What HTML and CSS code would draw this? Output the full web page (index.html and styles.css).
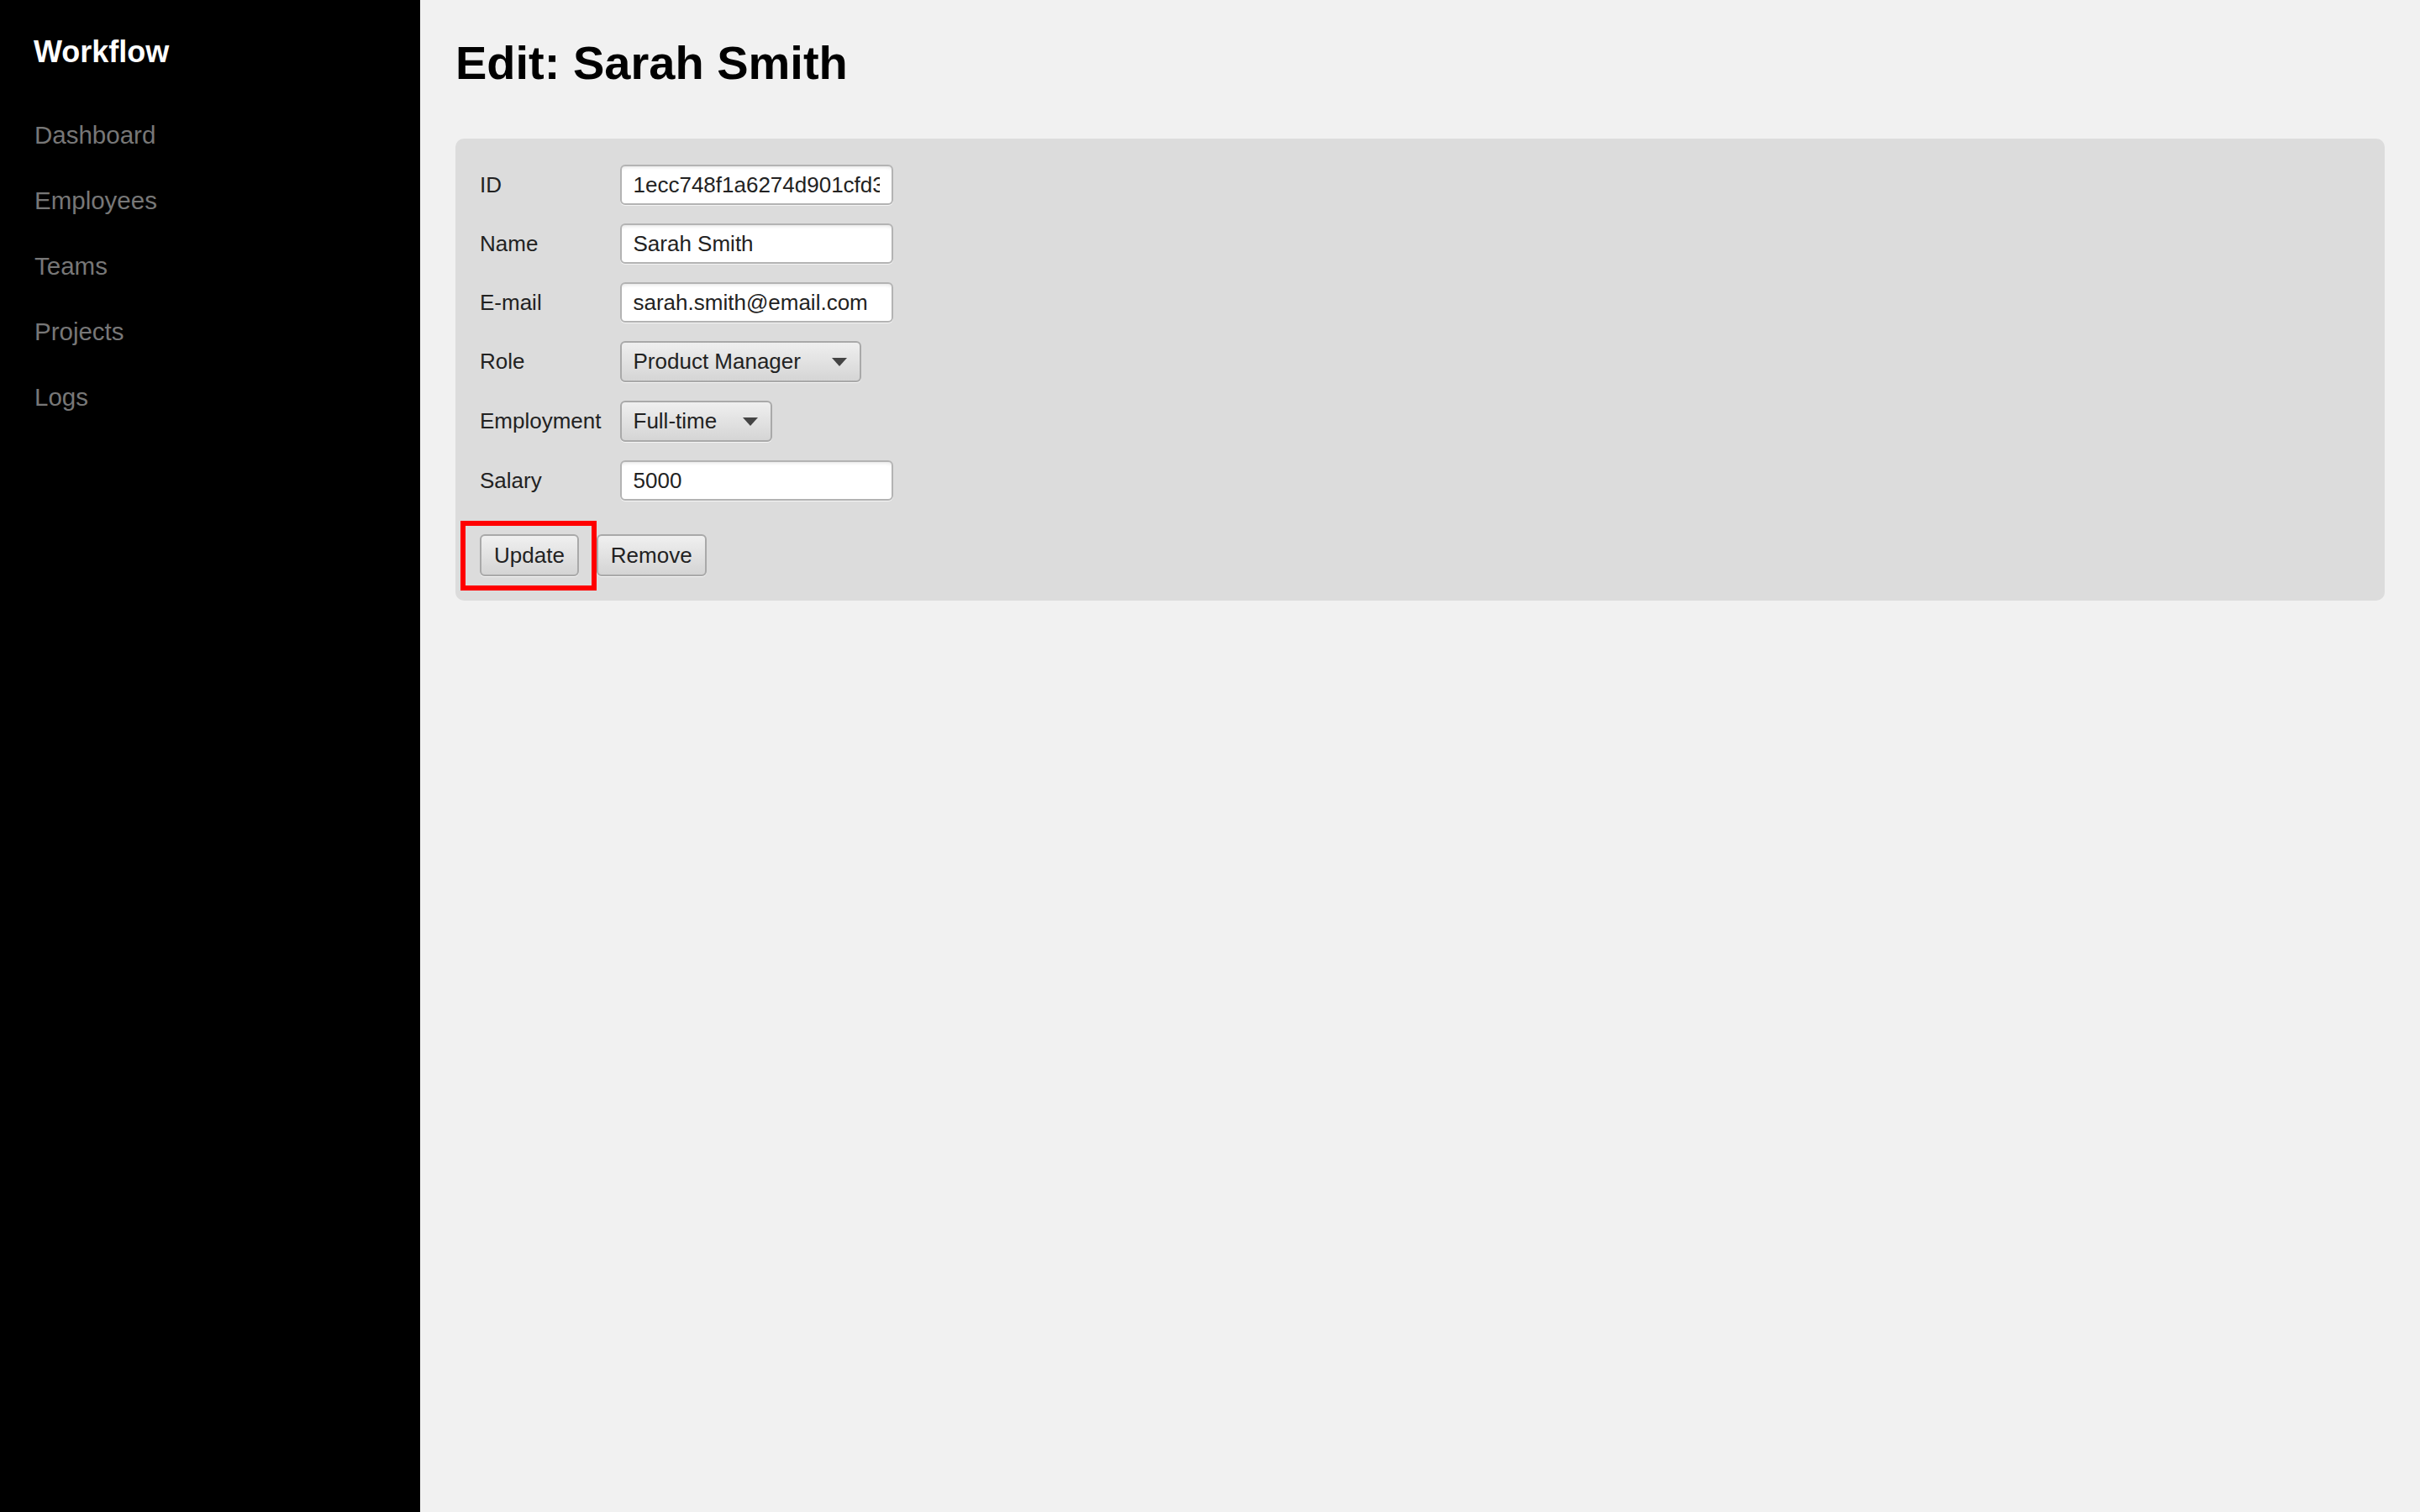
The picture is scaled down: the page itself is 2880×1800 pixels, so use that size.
FILE: index.html
```html
<!DOCTYPE html>
<html lang="en">
<head>
<meta charset="utf-8">
<title>Edit: Sarah Smith</title>
<link rel="stylesheet" href="styles.css">
</head>
<body>
<div class="app">
  <aside class="sidebar">
    <div class="brand">Workflow</div>
    <nav class="nav">
      <a class="nav-link" href="#">Dashboard</a>
      <a class="nav-link" href="#">Employees</a>
      <a class="nav-link" href="#">Teams</a>
      <a class="nav-link" href="#">Projects</a>
      <a class="nav-link" href="#">Logs</a>
    </nav>
  </aside>
  <main class="main">
    <h1 class="title">Edit: Sarah Smith</h1>
    <form class="panel">
      <div class="fields">
        <label class="label">ID</label>
        <input class="input" type="text" value="1ecc748f1a6274d901cfd3a8e2" readonly>
        <label class="label">Name</label>
        <input class="input" type="text" value="Sarah Smith">
        <label class="label">E-mail</label>
        <input class="input" type="text" value="sarah.smith@email.com">
        <label class="label">Role</label>
        <div class="select select-role">
          <span class="select-text">Product Manager</span>
          <svg class="caret" width="18" height="10" viewBox="0 0 18 10"><path d="M0 0 H18 L9 10 Z" fill="#444"/></svg>
        </div>
        <label class="label">Employment</label>
        <div class="select select-emp">
          <span class="select-text">Full-time</span>
          <svg class="caret" width="18" height="10" viewBox="0 0 18 10"><path d="M0 0 H18 L9 10 Z" fill="#444"/></svg>
        </div>
        <label class="label">Salary</label>
        <input class="input" type="text" value="5000">
      </div>
      <div class="actions">
        <span class="highlight"><button class="btn" type="button">Update</button></span>
        <button class="btn" type="button">Remove</button>
      </div>
    </form>
  </main>
</div>
</body>
</html>
```

FILE: styles.css
```css
html, body {
  margin: 0;
  padding: 0;
}
body {
  font-family: "Liberation Sans", Arial, sans-serif;
  background: #f1f1f1;
}
.app {
  display: flex;
  min-height: 100vh;
}
.sidebar {
  flex: none;
  width: 500px;
  box-sizing: border-box;
  background: #000;
  padding: 41px 40px 40px 40px;
}
.brand {
  color: #fff;
  font-weight: bold;
  font-size: 36px;
}
.nav {
  display: flex;
  flex-direction: column;
  margin-top: 39px;
  padding-left: 1px;
}
.nav-link {
  color: #777;
  text-decoration: none;
  font-size: 29.5px;
  padding: 22px 0;
}
.main {
  flex: 1;
  background: #f1f1f1;
  padding: 42px;
}
.title {
  margin: 0 0 58px;
  font-size: 56px;
  font-weight: bold;
  color: #000;
}
.panel {
  background: #dcdcdc;
  border-radius: 10px;
  padding: 31px 29px 29px;
}
.fields {
  display: grid;
  grid-template-columns: max-content max-content;
  column-gap: 22px;
  row-gap: 22px;
  align-items: center;
  justify-items: start;
}
.label {
  font-size: 26px;
  color: #222;
}
.input {
  width: 325px;
  height: 48px;
  box-sizing: border-box;
  border: 2px solid #b3b3b3;
  border-radius: 6px;
  padding: 0 14px;
  margin: 0;
  font-family: "Liberation Sans", Arial, sans-serif;
  font-size: 26px;
  color: #222;
  background: #fff;
  box-shadow: inset 0 4px 4px -3px rgba(0, 0, 0, 0.12), 0 1px 0 rgba(255, 255, 255, 0.7);
  outline: none;
}
.select {
  display: flex;
  align-items: center;
  justify-content: space-between;
  height: 49px;
  box-sizing: border-box;
  border: 2px solid #a9a9a9;
  border-radius: 6px;
  padding: 0 15px 0 14px;
  background: linear-gradient(#efefef, #d5d5d5);
  box-shadow: 0 1px 0 rgba(255, 255, 255, 0.7);
  font-size: 26px;
  color: #222;
}
.select-role {
  width: 287px;
}
.select-emp {
  width: 181px;
}
.caret {
  flex: none;
  display: block;
}
.actions {
  display: flex;
  gap: 21px;
  margin-top: 40px;
  align-items: center;
}
.highlight {
  position: relative;
  display: inline-flex;
}
.highlight::after {
  content: "";
  position: absolute;
  top: -16px;
  bottom: -17px;
  left: -23px;
  right: -21px;
  border: 6px solid #ff0000;
  pointer-events: none;
}
.btn {
  height: 50px;
  box-sizing: border-box;
  padding: 0 15px;
  margin: 0;
  border: 2px solid #a9a9a9;
  border-radius: 6px;
  background: linear-gradient(#f0f0f0, #d4d4d4);
  box-shadow: 0 1px 0 rgba(255, 255, 255, 0.7);
  font-family: "Liberation Sans", Arial, sans-serif;
  font-size: 26px;
  color: #222;
  cursor: pointer;
}
```
